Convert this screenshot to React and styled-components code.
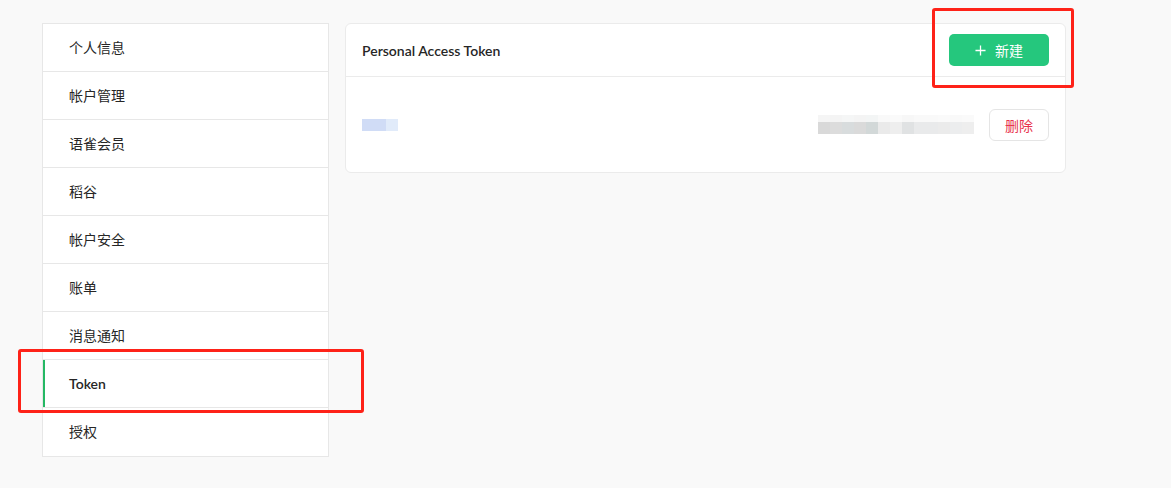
import React from "react";
import styled, { createGlobalStyle, css } from "styled-components";

const GlobalStyle = createGlobalStyle`
  html, body {
    margin: 0;
    padding: 0;
    background: #f9f9f9;
  }
  body {
    font-family: Lato, "Noto Sans CJK SC", sans-serif;
    color: #262626;
    font-size: 14px;
  }
`;

const Page = styled.div`
  position: relative;
  display: flex;
  align-items: flex-start;
  gap: 16px;
  padding: 23px 0 0 42px;
  width: 1171px;
  height: 488px;
  box-sizing: border-box;
`;

const Sidebar = styled.ul`
  list-style: none;
  margin: 0;
  padding: 0;
  width: 287px;
  box-sizing: border-box;
  background: #fff;
  border: 1px solid #e7e7e7;
`;

const MenuItem = styled.li`
  position: relative;
  height: 47px;
  line-height: 47px;
  padding-left: 26px;
  font-size: 14px;
  color: #262626;
  border-bottom: 1px solid #e7e7e7;
  &:last-child {
    height: 48px;
    border-bottom: none;
  }
  ${(p) =>
    p.active &&
    css`
      font-weight: 600;
      &::before {
        content: "";
        position: absolute;
        left: 0;
        top: 0;
        bottom: 0;
        width: 2px;
        background: #25b864;
      }
    `}
`;

const Card = styled.section`
  width: 721px;
  box-sizing: border-box;
  background: #fff;
  border: 1px solid #ebebeb;
  border-radius: 6px;
`;

const CardHeader = styled.header`
  display: flex;
  align-items: center;
  justify-content: space-between;
  height: 52px;
  padding: 0 16px 0 16px;
  border-bottom: 1px solid #ebebeb;
`;

const CardTitle = styled.h3`
  margin: 0;
  font-size: 14px;
  font-weight: 600;
  color: #262626;
`;

const PrimaryButton = styled.button`
  display: flex;
  align-items: center;
  justify-content: center;
  gap: 9px;
  width: 100px;
  height: 32px;
  border: none;
  border-radius: 5px;
  background: #25c77d;
  color: #fff;
  font-family: inherit;
  font-size: 14px;
  cursor: pointer;
`;

const CardBody = styled.div`
  display: flex;
  align-items: center;
  height: 95px;
  padding: 0 16px;
`;

const Mosaic = styled.div`
  display: grid;
  grid-template-columns: repeat(${(p) => p.cols}, 12px);
  grid-template-rows: ${(p) => p.rows};
`;

const Cell = styled.span`
  display: block;
`;

const Spacer = styled.div`
  flex: 1;
`;

const DangerButton = styled.button`
  margin-left: 15px;
  width: 60px;
  height: 32px;
  background: #fff;
  border: 1px solid #e5e5e5;
  border-radius: 6px;
  color: #e8344e;
  font-family: inherit;
  font-size: 14px;
  cursor: pointer;
`;

const Highlight = styled.div`
  position: absolute;
  border: 3px solid #fe2218;
  border-radius: 3px;
  box-sizing: border-box;
`;

const menu = ["个人信息", "帐户管理", "语雀会员", "稻谷", "帐户安全", "账单", "消息通知", "Token", "授权"];

const nameCells = ["#d0dcf6", "#d0dcf6", "#e1ebfa"];
const tokenCells = [
  "#f5f5f5", "#f4f4f4", "#f5f6f6", "#f4f4f4", "#f3f5f5", "#f9f9f9", "#fafafa", "#f7f7f7", "#f9f9f9", "#f9f9f9", "#fafafa", "#f9f9f9", "#fafafa",
  "#d9d9d9", "#dcdcdc", "#d8dcdd", "#dadada", "#d2d8d8", "#eaeaea", "#eeeeee", "#e0e2e3", "#e9eaeb", "#e9eaeb", "#ebebeb", "#ecedee", "#eeeeee",
];

const PlusIcon = () => (
  <svg width="11" height="11" viewBox="0 0 12 12">
    <path d="M6 0.5v11M0.5 6h11" stroke="#fff" strokeWidth="1.4" />
  </svg>
);

const App = () => {
  return (
    <Page>
      <GlobalStyle />
      <Sidebar>
        {menu.map((m) => (
          <MenuItem key={m} active={m === "Token"}>
            {m}
          </MenuItem>
        ))}
      </Sidebar>
      <Card>
        <CardHeader>
          <CardTitle>Personal Access Token</CardTitle>
          <PrimaryButton>
            <PlusIcon />
            新建
          </PrimaryButton>
        </CardHeader>
        <CardBody>
          <Mosaic cols={3} rows="12px">
            {nameCells.map((c, i) => (
              <Cell key={i} style={{ background: c }} />
            ))}
          </Mosaic>
          <Spacer />
          <Mosaic cols={13} rows="7px 12px">
            {tokenCells.map((c, i) => (
              <Cell key={i} style={{ background: c }} />
            ))}
          </Mosaic>
          <DangerButton>删除</DangerButton>
        </CardBody>
      </Card>
      <Highlight style={{ left: 18, top: 349, width: 346, height: 64 }} />
      <Highlight style={{ left: 932, top: 8, width: 142, height: 80 }} />
    </Page>
  );
};

export default App;
